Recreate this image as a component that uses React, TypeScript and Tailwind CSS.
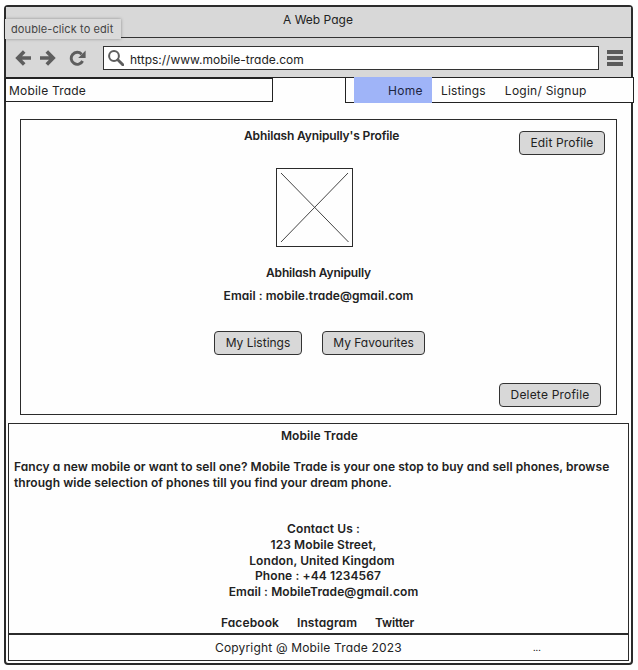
import type { ReactNode } from "react";

function Arrow({ flip = false }: { flip?: boolean }) {
  return (
    <svg viewBox="0 0 16 16" className={flip ? "h-4 w-4 -scale-x-100" : "h-4 w-4"} fill="none" stroke="#5e5e5e" strokeWidth="3.6">
      <path d="M9.2 1.4 2.8 8l6.4 6.6M3 8h13" />
    </svg>
  );
}

function Reload() {
  return (
    <svg viewBox="0 0 17 16" className="h-4 w-[17px]">
      <path d="M12.6 4.2A6 6 0 1 0 13.6 11" fill="none" stroke="#5e5e5e" strokeWidth="2.9" />
      <path d="M16.6 0.6V8H9.2Z" fill="#5e5e5e" />
    </svg>
  );
}

function Search() {
  return (
    <svg viewBox="0 0 16 16" className="h-4 w-4" fill="none" stroke="#5e5e5e">
      <circle cx="6" cy="6" r="4.9" strokeWidth="2" />
      <path d="m9.8 9.8 5 5" strokeWidth="2.9" strokeLinecap="round" />
    </svg>
  );
}

function Button({ className, children }: { className: string; children: ReactNode }) {
  return (
    <button className={`flex h-6 shrink-0 items-center justify-center rounded-[4px] border border-[#333] bg-[#d8d8d8] pb-px leading-4 ${className}`}>
      {children}
    </button>
  );
}

export default function App() {
  return (
    <div className="h-[670px] w-[638px] overflow-hidden bg-[#fefefe] pt-[5px] pl-1 font-['Inter','Liberation_Sans',sans-serif] text-xs leading-4 whitespace-nowrap text-[#222] [font-feature-settings:'cv11']">
      <div className="relative h-[660px] w-[629px] rounded-[4px] border-2 border-[#2b2b2b]">
        <header className="bg-[#d8d8d8]">
          <div className="h-[31px] border-b border-[#333] pt-[5px] pl-[277px]">A Web Page</div>
          <div className="flex h-10 items-center border-b border-[#222] pl-[9px]">
            <Arrow />
            <div className="ml-[9px]"><Arrow flip /></div>
            <div className="ml-[13px]"><Reload /></div>
            <div className="ml-[17px] flex h-6 w-[496px] items-center border border-[#333] bg-white pl-1">
              <Search />
              <span className="ml-[6px] pt-[4px]">https://www.mobile-trade.com</span>
            </div>
            <div className="ml-2 flex flex-col gap-[2px]">
              <i className="h-1 w-4 bg-[#5a5a5a]" />
              <i className="h-1 w-4 bg-[#5a5a5a]" />
              <i className="h-1 w-4 bg-[#5a5a5a]" />
            </div>
          </div>
        </header>

        <nav className="flex h-[25px]">
          <div className="-ml-px h-6 w-[268px] shrink-0 border border-[#222] bg-[#fefefe] pt-1 pl-[3px] tracking-[0.2px]">Mobile Trade</div>
          <div className="-mt-px ml-[72px] flex h-[26px] w-[289px] shrink-0 border border-[#222] bg-[#fefefe]">
            <a className="-my-px ml-2 h-[26px] w-[78px] bg-[#9fb4f8] pt-[6px] pl-[34px] tracking-[0.3px] text-[#1d2440]">Home</a>
            <a className="ml-[9px] pt-[5px] tracking-[0.15px]">Listings</a>
            <a className="ml-[19px] pt-[5px] tracking-[0.25px]">Login/ Signup</a>
          </div>
        </nav>

        <main className="mt-4 ml-[14px] h-[296px] w-[597px] border border-[#2b2b2b]">
          <div className="flex h-12 justify-between pt-[11px] pr-[11px] pl-[223px]">
            <h1 className="-mt-[3px] font-semibold tracking-[-0.14px]">Abhilash Aynipully's Profile</h1>
            <Button className="w-[86px] tracking-[0.15px]">Edit Profile</Button>
          </div>
          <svg viewBox="0 0 77 79" className="ml-[255px] h-[79px] w-[77px]" fill="none" stroke="#2b2b2b">
            <rect x="0.5" y="0.5" width="76" height="78" />
            <path d="m5 5 67.5 69M72 5 5 74" stroke="#444" />
          </svg>
          <p className="mt-[18px] text-center font-semibold tracking-[-0.17px]">Abhilash Aynipully</p>
          <p className="mt-[7px] text-center font-semibold tracking-[0.05px]">Email : mobile.trade@gmail.com</p>
          <div className="mt-[27px] flex gap-5 pl-[193px]">
            <Button className="w-[88px]">My Listings</Button>
            <Button className="w-[103px]">My Favourites</Button>
          </div>
          <div className="mt-7 flex justify-end pr-[15px]">
            <Button className="w-[102px] tracking-[0.2px]">Delete Profile</Button>
          </div>
        </main>

        <footer className="mt-2 ml-[2px] h-[238px] w-[621px] border border-[#2b2b2b]">
          <div className="h-[211px] border-b-2 border-[#2b2b2b] pt-1 font-semibold">
            <h2 className="pl-[2px] text-center tracking-[0.08px]">Mobile Trade</h2>
            <p className="mt-[15px] pl-[5px] leading-[15.7px] tracking-[0.065px]">
              Fancy a new mobile or want to sell one? Mobile Trade is your one stop to buy and sell phones, browse
              <br />
              through wide selection of phones till you find your dream phone.
            </p>
            <div className="mt-[31px] pl-[10px] text-center leading-[15.6px] tracking-[0.1px]">
              <p>Contact Us :</p>
              <p>123 Mobile Street,</p>
              <p className="pr-[3px]">London, United Kingdom</p>
              <p className="pr-[11px]">Phone : +44 1234567</p>
              <p>Email : MobileTrade@gmail.com</p>
            </div>
            <div className="mt-4 flex pl-[212px]">
              <a className="w-[76px] tracking-[0.1px]">Facebook</a>
              <a className="w-[78px] tracking-[0.1px]">Instagram</a>
              <a className="tracking-[-0.15px]">Twitter</a>
            </div>
          </div>
          <div className="flex pt-[5px] pl-[206px]">
            <span className="w-[318px] tracking-[0.17px]">Copyright @ Mobile Trade 2023</span>
            <span className="text-[9px]">...</span>
          </div>
        </footer>

        <div className="absolute top-3 -left-px flex h-5 w-[116px] items-center bg-[#dadada] pl-[6px] text-[11px] tracking-[0.1px] text-[#444] shadow-[0_0_3px_rgba(0,0,0,0.35)]">
          double-click to edit
        </div>
      </div>
    </div>
  );
}
